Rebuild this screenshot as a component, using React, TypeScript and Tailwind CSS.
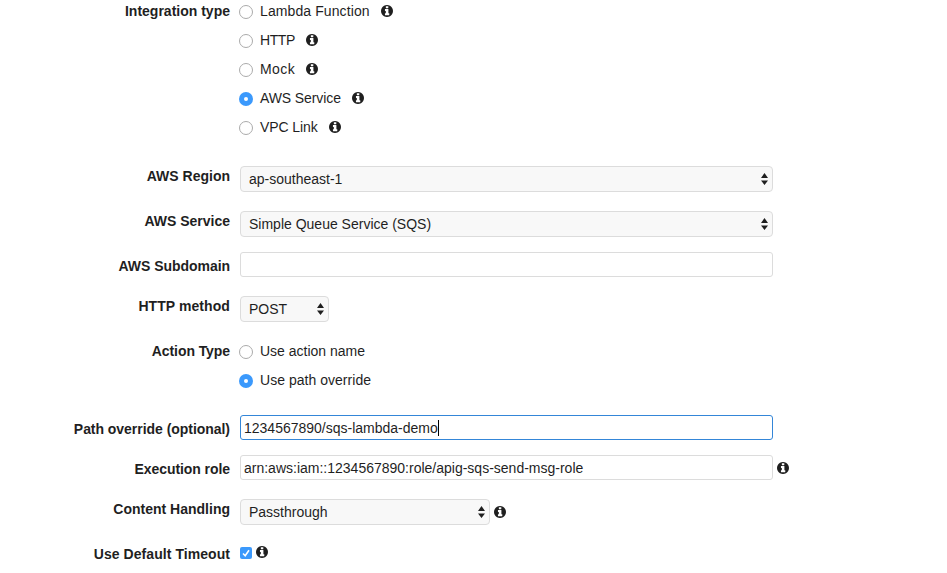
import type { ReactNode } from "react";

function InfoIcon({ className = "" }: { className?: string }) {
  return (
    <svg viewBox="0 0 1536 1536" className={`size-3 shrink-0 fill-[#1f1f1f] ${className}`}>
      <path d="M1060 1270v-190q0-14-9-23t-23-9h-80v-502q0-14-9-23t-23-9h-380q-14 0-23 9t-9 23v180q0 14 9 23t23 9h80v290h-80q-14 0-23 9t-9 23v190q0 14 9 23t23 9h492q14 0 23-9t9-23zM936 372v-190q0-14-9-23t-23-9h-252q-14 0-23 9t-9 23v190q0 14 9 23t23 9h252q14 0 23-9t9-23zM1536 768q0 209-103 385.500t-279.500 279.500t-385.500 103t-385.500-103t-279.500-279.500t-103-385.500t103-385.500t279.500-279.500t385.500-103t385.500 103t279.500 279.500t103 385.500z" />
    </svg>
  );
}

function Row({ label, className, labelClass = "", children }: {
  label: string;
  className: string;
  labelClass?: string;
  children: ReactNode;
}) {
  return (
    <div className={`flex items-start ${className}`}>
      <div className={`w-[230px] shrink-0 text-right font-bold ${labelClass}`}>{label}</div>
      {children}
    </div>
  );
}

function Radio({ label, checked = false, info = false, textClass = "" }: {
  label: string;
  checked?: boolean;
  info?: boolean;
  textClass?: string;
}) {
  return (
    <label className="flex h-5 items-center">
      <span
        className={`mt-0.5 flex size-3.5 items-center justify-center rounded-full ${
          checked ? "bg-[#3b99fc]" : "border border-[#ababab] bg-white"
        }`}
      >
        {checked && <span className="size-1 rounded-full bg-white" />}
      </span>
      <span className={`ml-[7px] ${textClass}`}>{label}</span>
      {info && <InfoIcon className="ml-[11px]" />}
    </label>
  );
}

function Select({ value, className }: { value: string; className: string }) {
  return (
    <div
      className={`ml-2.5 flex h-[26px] items-center justify-between rounded-[4px] border border-[#dcdcdc] bg-[#f8f8f8] pr-1 pl-2 ${className}`}
    >
      <span>{value}</span>
      <svg viewBox="0 0 7 12" className="h-3 w-[7px] fill-[#1f1f1f]">
        <path d="M3.500 0L7 5H0zM0 7.500H7L3.500 12z" />
      </svg>
    </div>
  );
}

function Input({ value = "", focused = false }: { value?: string; focused?: boolean }) {
  return (
    <div
      className={`ml-2.5 flex h-[25px] w-[533px] items-center rounded-[3px] border bg-white pl-[3px] ${
        focused ? "border-[#3486d8]" : "border-[#dcdcdc]"
      }`}
    >
      <span>{value}</span>
      {focused && <span className="h-4 w-px bg-black" />}
    </div>
  );
}

export default function App() {
  return (
    <main className="h-[573px] w-[947px] overflow-hidden bg-white pt-px font-['Liberation_Sans',Arial,sans-serif] text-[14px] leading-5 text-[#1f1f1f]">
      <Row label="Integration type" className="h-[165px]">
        <div className="ml-[9px] flex flex-col gap-[9px]">
          <Radio label="Lambda Function" textClass="tracking-[0.1px]" info />
          <Radio label="HTTP" textClass="tracking-[-0.4px]" info />
          <Radio label="Mock" textClass="tracking-[0.4px]" info />
          <Radio label="AWS Service" textClass="tracking-[-0.1px]" checked info />
          <Radio label="VPC Link" textClass="tracking-[-0.1px]" info />
        </div>
      </Row>
      <Row label="AWS Region" className="h-[45px]">
        <Select value="ap-southeast-1" className="w-[533px]" />
      </Row>
      <Row label="AWS Service" className="h-[41px]">
        <Select value="Simple Queue Service (SQS)" className="w-[533px]" />
      </Row>
      <Row label="AWS Subdomain" className="h-11" labelClass="pt-1 tracking-[-0.04px]">
        <Input />
      </Row>
      <Row label="HTTP method" className="h-[45px]" labelClass="tracking-[0.08px]">
        <Select value="POST" className="w-[89px]" />
      </Row>
      <Row label="Action Type" className="h-[74px]" labelClass="tracking-[-0.08px]">
        <div className="ml-[9px] flex flex-col gap-[9px]">
          <Radio label="Use action name" />
          <Radio label="Use path override" textClass="tracking-[0.03px]" checked />
        </div>
      </Row>
      <Row label="Path override (optional)" className="h-10" labelClass="pt-1 tracking-[-0.04px]">
        <Input value="1234567890/sqs-lambda-demo" focused />
      </Row>
      <Row label="Execution role" className="h-11" labelClass="pt-1 tracking-[-0.07px]">
        <Input value="arn:aws:iam::1234567890:role/apig-sqs-send-msg-role" />
        <InfoIcon className="mt-[7px] ml-1" />
      </Row>
      <Row label="Content Handling" className="h-[45px]">
        <Select value="Passthrough" className="w-[250px]" />
        <InfoIcon className="mt-[7px] ml-1" />
      </Row>
      <Row label="Use Default Timeout" className="h-5" labelClass="tracking-[0.06px]">
        <span className="mt-[3px] ml-2.5 flex size-3 items-center justify-center rounded-[2px] bg-[#3b99fc]">
          <svg viewBox="0 0 12 12" className="size-3 fill-none stroke-white stroke-[1.600]">
            <path d="M3 6.500L5.200 8.700L9 3.300" />
          </svg>
        </span>
        <InfoIcon className="mt-0.5 ml-1" />
      </Row>
    </main>
  );
}
